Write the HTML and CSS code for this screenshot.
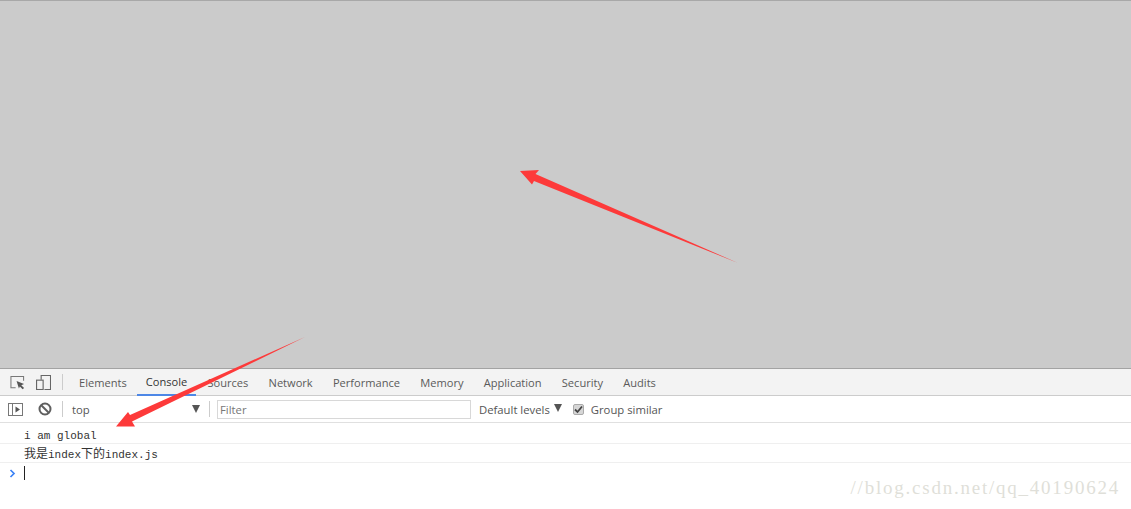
FILE: index.html
```html
<!DOCTYPE html>
<html lang="zh">
<head>
<meta charset="utf-8">
<title>Console</title>
<link rel="stylesheet" href="styles.css">
</head>
<body>
<main class="page">
  <div class="viewport"></div>
  <section class="devtools">
    <div class="tabbar">
      <div class="tool-icons">
        <svg class="icon" width="15" height="15" viewBox="0 0 16 16"><path d="M6 13.500H1V1.500H14.500V6" fill="none" stroke="#777" stroke-width="1.100"/><path d="M7 6.500l8 3-3 1.300 3 3-1.500 1.500-3-3L9.500 14.500z" fill="#555"/></svg>
        <svg class="icon" width="15" height="15" viewBox="0 0 16 16"><path d="M5.500 5V0.500H15.500V15.500H9" fill="none" stroke="#666" stroke-width="1.200"/><rect x="0.600" y="5.500" width="7" height="10" fill="none" stroke="#666" stroke-width="1.200"/></svg>
      </div>
      <span class="divider"></span>
      <nav class="tabs">
        <span class="tab">Elements</span>
        <span class="tab active">Console</span>
        <span class="tab">Sources</span>
        <span class="tab">Network</span>
        <span class="tab">Performance</span>
        <span class="tab">Memory</span>
        <span class="tab">Application</span>
        <span class="tab">Security</span>
        <span class="tab">Audits</span>
      </nav>
    </div>
    <div class="filterbar">
      <div class="filter-icons">
        <svg class="icon" width="15" height="13" viewBox="0 0 15 13"><rect x="0.500" y="0.500" width="14" height="12" fill="none" stroke="#777"/><path d="M4.500 0.500V12.500" stroke="#777"/><path d="M7.500 3.500l4.500 3-4.500 3z" fill="#555"/></svg>
        <svg class="icon" width="14" height="14" viewBox="0 0 14 14"><circle cx="7" cy="7" r="5.500" fill="none" stroke="#5f5f5f" stroke-width="2"/><path d="M3 3l8 8" stroke="#5f5f5f" stroke-width="2"/></svg>
      </div>
      <span class="divider"></span>
      <div class="context"><span>top</span><span class="caret"></span></div>
      <span class="divider"></span>
      <div class="filter-input">Filter</div>
      <div class="levels"><span>Default levels</span><span class="caret small"></span></div>
      <label class="group"><span class="checkbox"><svg width="9" height="9" viewBox="0 0 9 9"><path d="M1 4.500l2.500 2.500L8 1.500" fill="none" stroke="#444" stroke-width="1.800"/></svg></span><span>Group similar</span></label>
    </div>
    <div class="log">
      <div class="row first">i am global</div>
      <div class="row second"><span class="cjk">我是</span>index<span class="cjk">下的</span>index.js</div>
      <div class="prompt">
        <svg width="7" height="9" viewBox="0 0 7 9"><path d="M1.500 1l3.500 3.500L1.500 8" fill="none" stroke="#3b82f6" stroke-width="1.700"/></svg>
        <span class="cursor"></span>
      </div>
    </div>
    <div class="watermark">//blog.csdn.net/qq_40190624</div>
  </section>
  <svg class="arrows" width="1131" height="509" viewBox="0 0 1131 509">
    <path d="M520 171L539 170L535.500 174L738 263L534 181L532 184.500Z" fill="#fd3a3a"/>
    <path d="M305 337L130 415L128 412L116 426.500L135 426.500L132 421.500Z" fill="#fd3a3a"/>
  </svg>
</main>
</body>
</html>
```
FILE: styles.css
```css
* { box-sizing: border-box; }
html, body { margin: 0; padding: 0; }
body { background: #fff; font-family: "Open Sans", "Liberation Sans", sans-serif; }
.page { position: relative; width: 1131px; height: 509px; overflow: hidden; display: flex; flex-direction: column; }
.viewport { height: 368px; background: #cbcbcb; border-top: 1px solid #a8a8a8; }
.devtools { flex: 1; display: flex; flex-direction: column; position: relative; background: #fff; }
.tabbar { height: 28px; display: flex; align-items: center; background: #f3f3f3; border-top: 1px solid #a3a3a3; border-bottom: 1px solid #ccc; padding-left: 10px; }
.tool-icons { display: flex; gap: 11px; align-items: center; width: 52px; }
.icon { display: block; flex: none; }
.divider { width: 1px; height: 16px; background: #ccc; flex: none; }
.tabs { display: flex; height: 100%; margin-left: 7px; }
.tab { display: flex; align-items: center; padding: 0 9px; height: 27px; font-size: 11.100px; color: #5a5a5a; white-space: nowrap; }
.tab + .tab { margin-left: 2.200px; }
.tab + .tab.active { margin-left: 1px; color: #333; border-bottom: 2px solid #4d87e6; }
.filterbar { height: 27px; display: flex; align-items: center; border-bottom: 1px solid #e0e0e0; padding-left: 8px; font-size: 11.300px; color: #555; }
.filter-icons { display: flex; align-items: center; gap: 15px; width: 54px; }
.context { width: 146px; display: flex; align-items: center; justify-content: space-between; padding: 0 9px; }
.caret { width: 0; height: 0; border-left: 4.500px solid transparent; border-right: 4.500px solid transparent; border-top: 8px solid #555; }
.caret.small { margin-left: 4px; margin-top: -3px; }
.filter-input { width: 254px; height: 19px; margin-left: 7px; border: 1px solid #d8d8d8; background: #fff; padding: 1px 2px 0; line-height: 16px; color: #777; }
.levels { display: flex; align-items: center; margin-left: 8px; white-space: nowrap; }
.group { display: flex; align-items: center; gap: 7px; margin-left: 11px; white-space: nowrap; }
.checkbox { width: 11px; height: 11px; border-radius: 2px; background: #d6d6d6; border: 1px solid #aaa; display: flex; align-items: center; justify-content: center; }
.log { font-family: "Liberation Mono", "Noto Sans CJK SC", monospace; font-size: 11px; color: #333; }
.row { padding-left: 24px; border-bottom: 1px solid #efefef; white-space: nowrap; }
.first { height: 21px; padding-top: 6px; line-height: 14px; }
.second { height: 19px; padding-top: 3px; line-height: 15px; }
.cjk { font-size: 12px; line-height: 1; font-family: "Noto Sans CJK SC", sans-serif; }
.prompt { display: flex; align-items: center; height: 20px; padding-left: 9px; gap: 8px; }
.cursor { width: 1px; height: 14px; background: #222; }
.watermark { position: absolute; right: 11px; top: 109px; font-family: "Liberation Serif", serif; font-size: 19px; letter-spacing: 1.770px; color: #dfdfd9; white-space: nowrap; }
.arrows { position: absolute; left: 0; top: 0; pointer-events: none; }
```
